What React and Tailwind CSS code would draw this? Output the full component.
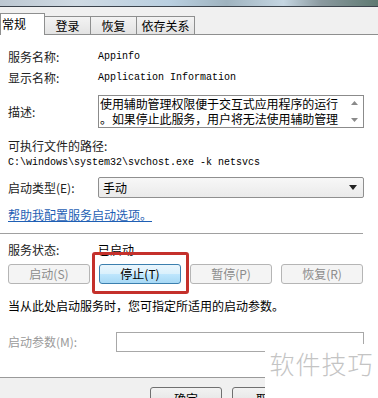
export default function App() {
  const cjk = { fontFamily: '"SimSun","Noto Sans CJK SC",sans-serif' };
  return (
    <div className="relative w-[378px] h-[398px] overflow-hidden bg-white text-[12px] leading-[16px] text-black" style={cjk}>
      {/* top strip */}
      <div className="h-[7px] bg-[linear-gradient(90deg,#bcc7d1_0%,#cfdae3_20%,#b9cfe0_45%,#9fb3bf_60%,#c5d6e2_75%,#8a999f_85%,#5f7a72_100%)] border-b border-[#3b434c]" />
      {/* tabs */}
      <div className="h-[28px] bg-[#f0f0f0] flex items-end border-b border-[#8e8f8f]">
        <div className="relative -mb-px h-[22px] w-[45px] bg-white border border-b-0 border-[#8e8f8f] pl-[1px] pt-[2px] flex">常规</div>
        <div className="h-[18px] w-[46px] bg-[linear-gradient(#f3f3f3,#e3e3e3)] border border-b-0 border-[#8e8f8f] border-l-0 flex items-center justify-center">登录</div>
        <div className="h-[18px] w-[46px] bg-[linear-gradient(#f3f3f3,#e3e3e3)] border border-b-0 border-[#8e8f8f] border-l-0 flex items-center justify-center">恢复</div>
        <div className="h-[18px] w-[58px] bg-[linear-gradient(#f3f3f3,#e3e3e3)] border border-b-0 border-[#8e8f8f] border-l-0 flex items-center justify-center">依存关系</div>
      </div>

      <div className="px-[8px] pt-[14px] pr-[14px]">
        <div className="flex h-[16px] items-center">
          <div className="w-[90px] text-[#222]">服务名称:</div>
          <div className="text-[10px] font-['Liberation_Mono',monospace]">Appinfo</div>
        </div>
        <div className="flex h-[16px] items-center mt-[5px]">
          <div className="w-[90px] text-[#222]">显示名称:</div>
          <div className="text-[10px] font-['Liberation_Mono',monospace]">Application Information</div>
        </div>
        <div className="flex mt-[9px] items-center">
          <div className="w-[90px] text-[#222]">描述:</div>
          <div className="flex-1 h-[33px] border border-[#8b8b8b] flex leading-[15px] overflow-hidden">
            <div className="flex-1 pl-[1px] text-[12px] tracking-[-0.1px]">
              <div>使用辅助管理权限便于交互式应用程序的运行</div>
              <div>。如果停止此服务，用户将无法使用辅助管理</div>
            </div>
            <div className="w-[16px] flex flex-col items-center justify-between py-[5px] pr-[2px]">
              <svg width="7" height="4" viewBox="0 0 7 4"><path d="M0 4L3.5 0L7 4Z" fill="#8a8a8a" /></svg>
              <svg width="7" height="4" viewBox="0 0 7 4"><path d="M0 0L3.5 4L7 0Z" fill="#8a8a8a" /></svg>
            </div>
          </div>
        </div>
        <div className="mt-[10px] h-[16px] text-[#222]">可执行文件的路径:</div>
        <div className="mt-[2px] h-[14px] text-[10px] leading-[14px] font-['Liberation_Mono',monospace]">C:\windows\system32\svchost.exe -k netsvcs</div>
        <div className="flex mt-[7px] items-center">
          <div className="w-[90px] text-[#222]">启动类型(E):</div>
          <div className="flex-1 h-[21px] border border-[#8f8f8f] rounded-[2px] bg-[linear-gradient(#f7f7f7,#eaeaea)] flex items-center justify-between pl-[4px] pr-[6px]">
            <span>手动</span>
            <svg width="8" height="5" viewBox="0 0 8 5"><path d="M0 0L4 5L8 0Z" fill="#222" /></svg>
          </div>
        </div>
        <div className="mt-[9px] h-[16px] text-[#1f5fb4] underline">帮助我配置服务启动选项。</div>
      </div>
      <div className="mt-[10px] mr-[15px] border-t border-[#a0a0a0]" />
      <div className="px-[8px] pr-[14px]">
        <div className="flex h-[16px] items-center mt-[8px]">
          <div className="w-[90px] text-[#222]">服务状态:</div>
          <div>已启动</div>
        </div>
        <div className="flex gap-[9px] mt-[6px]">
          <div className="w-[82px] h-[20px] border border-[#b5b5b5] rounded-[3px] bg-[#f4f4f4] text-[#8c8c8c] flex items-center justify-center">启动(S)</div>
          <div className="w-[82px] h-[20px] border border-[#3b7fae] rounded-[3px] bg-[linear-gradient(#eaf6fd_0%,#d9f0fc_50%,#bee6fd_51%,#a7d9f5_100%)] flex items-center justify-center">停止(T)</div>
          <div className="w-[82px] h-[20px] border border-[#b5b5b5] rounded-[3px] bg-[#f4f4f4] text-[#8c8c8c] flex items-center justify-center">暂停(P)</div>
          <div className="w-[82px] h-[20px] border border-[#b5b5b5] rounded-[3px] bg-[#f4f4f4] text-[#8c8c8c] flex items-center justify-center">恢复(R)</div>
        </div>
        <div className="mt-[14px] h-[16px]">当从此处启动服务时，您可指定所适用的启动参数。</div>
        <div className="flex items-center mt-[18px]">
          <div className="w-[108px] text-[#9a9a9a]">启动参数(M):</div>
          <div className="flex-1 h-[20px] border border-[#a8a8a8] bg-white" />
        </div>
      </div>
      <div className="mt-[25px] border-t border-[#9a9a9a] bg-[#f0f0f0] h-[30px] flex pl-[150px] gap-[10px] pt-[9px]">
        <div className="w-[72px] h-[22px] border border-[#707070] rounded-[3px] bg-[linear-gradient(#f2f2f2,#e0e0e0)] flex items-start justify-center pt-[3px]">确定</div>
        <div className="w-[72px] h-[22px] border border-[#707070] rounded-[3px] bg-[linear-gradient(#f2f2f2,#e0e0e0)] flex items-start justify-center pt-[3px]">取消</div>
      </div>

      {/* red highlight */}
      <div className="absolute left-[92px] top-[252px] w-[97px] h-[42px] border-[3px] border-[#c4302b] rounded-[3px]" />
      {/* watermark */}
      <div className="absolute left-[265px] top-[344px] w-[113px] h-[54px] bg-white flex items-start justify-center pt-[4px]">
        <span className="text-[25px] leading-[30px] text-[#c4c4c4] tracking-[1px]" style={{ fontFamily: '"Noto Sans CJK SC",sans-serif', fontWeight: 300 }}>软件技巧</span>
      </div>
    </div>
  );
}
